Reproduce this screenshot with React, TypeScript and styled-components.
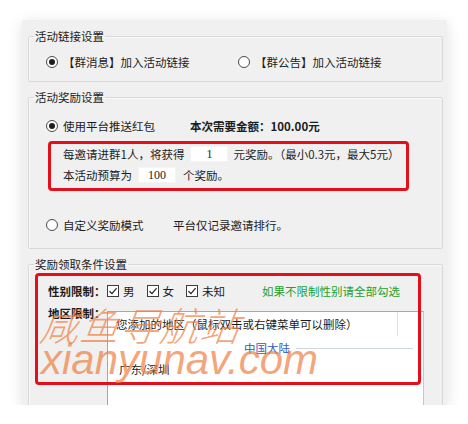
import React from 'react';
import styled, { createGlobalStyle } from 'styled-components';

const GlobalStyle = createGlobalStyle`
  body {
    margin: 0;
    background: #ffffff;
    font-family: "Noto Sans CJK SC", "Liberation Sans", sans-serif;
    color: #1c1c1c;
  }
`;

const Panel = styled.div`
  position: relative;
  box-sizing: border-box;
  width: 425px;
  height: 385px;
  margin: 20px 0 0 22px;
  padding: 9px 4px 0 6px;
  background: #f0f0f0;
  box-shadow: 0 3px 14px rgba(0, 0, 0, 0.12);
  overflow: hidden;
  display: flex;
  flex-direction: column;
  gap: 8px;
  font-size: 11.5px;
  line-height: 14px;
`;

const Group = styled.fieldset<{ $pad: string }>`
  margin: 0;
  min-width: 0;
  padding: ${(p) => p.$pad};
  border: 1px solid #d8d8d8;
  border-radius: 2px;
  box-shadow: inset 1px 1px 0 #fafafa;
  flex-shrink: 0;
`;

const Legend = styled.legend<{ $shift: number }>`
  margin-left: ${(p) => p.$shift}px;
  padding: 0 1px;
  font-size: 11.5px;
  line-height: 14px;
  color: #222;
`;

const Row = styled.div`
  display: flex;
  align-items: center;
  height: 14px;
`;

const Option = styled.label<{ $width?: number }>`
  display: flex;
  align-items: center;
  gap: 5px;
  width: ${(p) => (p.$width ? `${p.$width}px` : 'auto')};
  flex-shrink: 0;
  white-space: nowrap;
`;

const RadioDot = styled.span<{ $checked?: boolean }>`
  box-sizing: border-box;
  width: 12px;
  height: 12px;
  border-radius: 50%;
  border: 1px solid #4a4a4a;
  background: #fff;
  display: flex;
  align-items: center;
  justify-content: center;

  &::after {
    content: '';
    width: 6px;
    height: 6px;
    border-radius: 50%;
    background: ${(p) => (p.$checked ? '#1e1e1e' : 'transparent')};
  }
`;

const Bold = styled.span`
  font-weight: 700;
  white-space: nowrap;
`;

const Plain = styled.span`
  white-space: nowrap;
`;

const RedFrame = styled.div`
  box-sizing: border-box;
  width: 361px;
  margin: 8px 0 0 2px;
  padding: 2px 0 5px 12px;
  border: 3px solid #e3101c;
  border-radius: 4px;
  display: flex;
  flex-direction: column;
  gap: 5px;
`;

const FieldLine = styled.div`
  display: flex;
  align-items: center;
  height: 16px;
  white-space: nowrap;
`;

const InputBox = styled.span<{ $gapLeft: number; $gapRight: number }>`
  box-sizing: border-box;
  width: 38px;
  height: 16px;
  margin: 0 ${(p) => p.$gapRight}px 0 ${(p) => p.$gapLeft}px;
  background: #fff;
  border: 1px solid #f4f4f4;
  text-align: center;
  line-height: 14px;
  font-family: "Liberation Serif", serif;
  font-size: 12px;
`;

const CustomRow = styled(Row)`
  margin-top: 27px;
`;

const SideLabel = styled.span`
  width: 59px;
  flex-shrink: 0;
  font-weight: 700;
  white-space: nowrap;
`;

const CheckOption = styled.label`
  display: flex;
  align-items: center;
  gap: 4px;
  margin-right: 12px;
  white-space: nowrap;
`;

const CheckBox = styled.span`
  box-sizing: border-box;
  width: 12px;
  height: 12px;
  border: 1px solid #3c3c3c;
  background: #fff;
  display: flex;
  align-items: center;
  justify-content: center;
`;

const Hint = styled.span`
  margin-left: 25px;
  color: #22a12a;
  white-space: nowrap;
`;

const RegionRow = styled.div`
  display: flex;
  align-items: flex-start;
  margin-top: 8px;
`;

const ListBox = styled.div`
  box-sizing: border-box;
  width: 317px;
  height: 120px;
  margin-top: 5px;
  background: #fff;
  border: 1px solid #a8a8a8;
  border-right-color: #c8c8c8;
`;

const ListHeader = styled.div`
  display: flex;
  height: 24px;
  align-items: center;
`;

const HeaderCell = styled.div`
  box-sizing: border-box;
  width: 290px;
  height: 24px;
  padding-left: 8px;
  display: flex;
  align-items: center;
  border-right: 1px solid #e0e0e0;
  white-space: nowrap;
`;

const GroupHeader = styled.div`
  display: flex;
  align-items: center;
  height: 24px;
  padding: 0 10px 0 136px;
  color: #3558c0;
  gap: 6px;

  &::after {
    content: '';
    flex: 1;
    height: 1px;
    background: #cfd6e4;
  }
`;

const ListItem = styled.div`
  height: 14px;
  padding-left: 11px;
  margin-top: 2px;
`;

const AnnotationFrame = styled.div`
  position: absolute;
  left: 13px;
  top: 253px;
  width: 386px;
  height: 112px;
  box-sizing: border-box;
  border: 3px solid #e3101c;
  border-radius: 4px;
  pointer-events: none;
`;

const Watermark = styled.div`
  position: absolute;
  left: 19px;
  top: 280px;
  color: rgba(240, 130, 70, 0.72);
  font-style: italic;
  font-weight: 300;
  pointer-events: none;
  white-space: nowrap;
`;

const WatermarkCn = styled.div`
  font-family: "Noto Sans CJK SC", sans-serif;
  font-size: 39px;
  line-height: 48px;
  letter-spacing: 1px;
  transform: skewX(-8deg);
`;

const WatermarkEn = styled.div`
  font-family: "Liberation Sans", sans-serif;
  font-size: 42px;
  line-height: 40px;
  margin-top: -8px;
`;

const Check = () => (
  <svg width='10' height='10' viewBox='0 0 10 10'>
    <path d='M1.5 5.2 L4 7.6 L8.6 2.2' fill='none' stroke='#222' strokeWidth='1.2' />
  </svg>
);

const Radio: React.FC<{ checked?: boolean; label: string; width?: number }> = ({ checked, label, width }) => (
  <Option $width={ width }>
    <RadioDot $checked={ checked } />
    <Plain>{ label }</Plain>
  </Option>
);

const CheckItem: React.FC<{ label: string }> = ({ label }) => (
  <CheckOption>
    <CheckBox><Check /></CheckBox>
    <Plain>{ label }</Plain>
  </CheckOption>
);

export default function App() {
  return (
    <>
      <GlobalStyle />
      <Panel>
        <Group $pad='12px 10px 12px 17px'>
          <Legend $shift={ -12 }>活动链接设置</Legend>
          <Row>
            <Radio checked label='【群消息】加入活动链接' width={ 192 } />
            <Radio label='【群公告】加入活动链接' />
          </Row>
        </Group>

        <Group $pad='15px 10px 16px 17px'>
          <Legend $shift={ -12 }>活动奖励设置</Legend>
          <Row>
            <Radio checked label='使用平台推送红包' width={ 144 } />
            <Bold>本次需要金额：100.00元</Bold>
          </Row>
          <RedFrame>
            <FieldLine>
              每邀请进群1人，将获得
              <InputBox $gapLeft={ 6 } $gapRight={ 5 }>1</InputBox>
              元奖励。（最小0.3元，最大5元）
            </FieldLine>
            <FieldLine>
              本活动预算为
              <InputBox $gapLeft={ 6 } $gapRight={ 7 }>100</InputBox>
              个奖励。
            </FieldLine>
          </RedFrame>
          <CustomRow>
            <Radio label='自定义奖励模式' width={ 127 } />
            <Plain>平台仅记录邀请排行。</Plain>
          </CustomRow>
        </Group>

        <Group $pad='13px 10px 0 19px'>
          <Legend $shift={ -14 }>奖励领取条件设置</Legend>
          <Row>
            <SideLabel>性别限制：</SideLabel>
            <CheckItem label='男' />
            <CheckItem label='女' />
            <CheckItem label='未知' />
            <Hint>如果不限制性别请全部勾选</Hint>
          </Row>
          <RegionRow>
            <SideLabel>地区限制：</SideLabel>
            <ListBox>
              <ListHeader>
                <HeaderCell>您添加的地区（鼠标双击或右键菜单可以删除）</HeaderCell>
              </ListHeader>
              <GroupHeader>中国大陆</GroupHeader>
              <ListItem>广东/深圳</ListItem>
            </ListBox>
          </RegionRow>
        </Group>

        <AnnotationFrame />
        <Watermark>
          <WatermarkCn>咸鱼导航站</WatermarkCn>
          <WatermarkEn>xianyunav.com</WatermarkEn>
        </Watermark>
      </Panel>
    </>
  );
}
